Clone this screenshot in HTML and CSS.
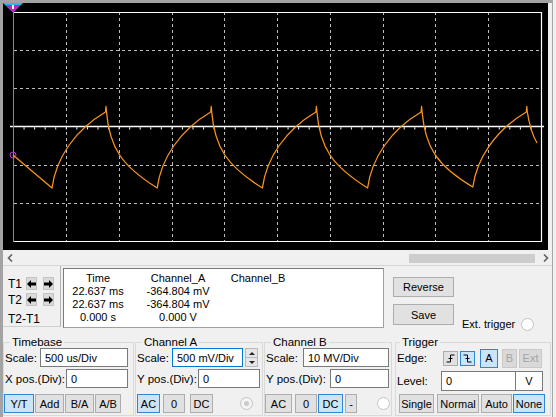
FILE: index.html
```html
<!DOCTYPE html>
<html lang="en">
<head>
    <meta charset="UTF-8">
    <title>Oscilloscope-XSC1</title>
    <link rel="stylesheet" href="styles.css">
</head>
<body>
<div class="scope-window">
    <div class="screen">
        <svg width="545" height="247" viewBox="3 3 545 247">
            <g stroke="#bdbdbd" stroke-width="1" stroke-dasharray="3 3" fill="none">
                <path d="M66.5 12 V241 M119.5 12 V241 M172.5 12 V241 M224.5 12 V241 M277.5 12 V241 M330.5 12 V241 M383.5 12 V241 M435.5 12 V241 M488.5 12 V241"/>
                <path d="M14 50.5 H541 M14 88.5 H541 M14 165.5 H541 M14 203.5 H541"/>
            </g>
            <g stroke="#fff" fill="none">
                <path d="M13 12.5 H541.5 V241.5 H13" stroke-width="1.2"/>
                <path d="M10 126.5 H544" stroke-width="1.3"/>
                <path d="M13 128.3 H542" stroke-width="2.2" stroke-dasharray="1 9.56"/>
            </g>
            <path d="M13.5 10 V242" stroke="#1ed21e" stroke-width="1"/>
            <path fill="none" stroke="#f7941d" stroke-width="1.3" stroke-linejoin="round"
                  d="M13 155 L52 188
                     C56 158 75 130 105.5 112 L106 106.5 L106.5 112 C109.5 148 122 166 157.2 188
                     C161.2 158 180.2 130 210.7 112 L211.2 106.5 L211.7 112 C214.7 148 227.2 166 262.4 188
                     C266.4 158 285.4 130 315.9 112 L316.4 106.5 L316.9 112 C319.9 148 332.4 166 367.6 188
                     C371.6 158 390.6 130 421.1 112 L421.6 106.5 L422.1 112 C425.1 148 437.6 166 472.8 187
                     C476.8 158 495.8 130 526.3 112 L526.8 106.5 L527.3 112 Q530.5 132 537 143"/>
            <circle cx="13" cy="155" r="3" fill="none" stroke="#c23cc2" stroke-width="1"/>
            <polygon points="3,3 23,3 13,12.5" fill="#18c6dc"/>
            <polygon points="5.5,5 20.5,5 13,12.5" fill="#c21ec2"/>
            <rect x="12" y="5" width="2" height="4" fill="#fff"/>
        </svg>
    </div>

    <div class="scrollbar">
        <div class="scroll-arrow">
            <svg width="6" height="8" viewBox="0 0 6 8"><path d="M5 0.5 L1.5 4 L5 7.5" fill="none" stroke="#606060" stroke-width="1.6"/></svg>
        </div>
        <div class="scroll-track">
            <div class="scroll-thumb"></div>
        </div>
        <div class="scroll-arrow scroll-arrow--right">
            <svg width="6" height="8" viewBox="0 0 6 8"><path d="M1 0.5 L4.5 4 L1 7.5" fill="none" stroke="#606060" stroke-width="1.6"/></svg>
        </div>
    </div>

    <div class="cursor-row">
        <div class="cursor-box">
            <div class="cursor-line">
                <span class="cursor-name">T1</span>
                <button class="arrow-btn"><svg width="9" height="8" viewBox="0 0 9 8"><path d="M0 4 L4 0 V2.5 H9 V5.5 H4 V8 Z"/></svg></button>
                <button class="arrow-btn"><svg width="9" height="8" viewBox="0 0 9 8"><path d="M9 4 L5 0 V2.5 H0 V5.5 H5 V8 Z"/></svg></button>
            </div>
            <div class="cursor-line cursor-line--second">
                <span class="cursor-name">T2</span>
                <button class="arrow-btn"><svg width="9" height="8" viewBox="0 0 9 8"><path d="M0 4 L4 0 V2.5 H9 V5.5 H4 V8 Z"/></svg></button>
                <button class="arrow-btn"><svg width="9" height="8" viewBox="0 0 9 8"><path d="M9 4 L5 0 V2.5 H0 V5.5 H5 V8 Z"/></svg></button>
            </div>
            <div class="cursor-diff">T2-T1</div>
        </div>

        <div class="readout">
            <div class="readout-row"><span>Time</span><span>Channel_A</span><span>Channel_B</span></div>
            <div class="readout-row"><span>22.637 ms</span><span>-364.804 mV</span><span></span></div>
            <div class="readout-row"><span>22.637 ms</span><span>-364.804 mV</span><span></span></div>
            <div class="readout-row"><span>0.000 s</span><span>0.000 V</span><span></span></div>
        </div>

        <div class="side-actions">
            <div class="side-buttons">
                <button class="btn side-btn side-btn--reverse">Reverse</button>
                <button class="btn side-btn side-btn--save">Save</button>
            </div>
            <div class="ext-trigger">
                <span>Ext. trigger</span>
                <span class="radio"></span>
            </div>
        </div>
    </div>

    <div class="settings">
        <fieldset class="group group-timebase">
            <legend>Timebase</legend>
            <div class="row">
                <span class="lbl" style="width:35px">Scale:</span>
                <input class="field" style="width:88px" value="500 us/Div" readonly>
            </div>
            <div class="row row--second">
                <span class="lbl" style="width:61px">X pos.(Div):</span>
                <input class="field" style="width:62px" value="0" readonly>
            </div>
            <div class="row row--buttons row--shift">
                <button class="btn on" style="width:30px">Y/T</button>
                <button class="btn" style="width:29px">Add</button>
                <button class="btn" style="width:29px">B/A</button>
                <button class="btn" style="width:26px">A/B</button>
            </div>
        </fieldset>

        <fieldset class="group group-channel-a">
            <legend>Channel A</legend>
            <div class="row">
                <span class="lbl" style="width:35px">Scale:</span>
                <input class="field field--focus" style="width:71px" value="500 mV/Div" readonly>
                <div class="spin">
                    <div class="spin-half"><span class="tri-up"></span></div>
                    <div class="spin-half"><span class="tri-down"></span></div>
                </div>
            </div>
            <div class="row row--second">
                <span class="lbl" style="width:61px">Y pos.(Div):</span>
                <input class="field" style="width:62px" value="0" readonly>
            </div>
            <div class="row row--buttons">
                <button class="btn on" style="width:23px">AC</button>
                <button class="btn" style="width:22px;margin-left:3px">0</button>
                <button class="btn" style="width:23px;margin-left:5px">DC</button>
                <span class="radio radio--dim" style="margin-left:27px"></span>
            </div>
        </fieldset>

        <fieldset class="group group-channel-b">
            <legend>Channel B</legend>
            <div class="row">
                <span class="lbl" style="width:37px">Scale:</span>
                <input class="field" style="width:86px" value="10 MV/Div" readonly>
            </div>
            <div class="row row--second">
                <span class="lbl" style="width:64px">Y pos.(Div):</span>
                <input class="field" style="width:59px" value="0" readonly>
            </div>
            <div class="row row--buttons row--shift">
                <button class="btn" style="width:27px">AC</button>
                <button class="btn" style="width:22px;margin-left:3px">0</button>
                <button class="btn on" style="width:25px;margin-left:1px">DC</button>
                <button class="btn" style="width:12px;margin-left:2px">-</button>
                <span class="radio" style="margin-left:20px"></span>
            </div>
        </fieldset>

        <fieldset class="group group-trigger">
            <legend>Trigger</legend>
            <div class="row row--edge">
                <span class="lbl" style="width:46px">Edge:</span>
                <button class="btn edge-btn">
                    <svg width="9" height="9" viewBox="0 0 9 9"><path d="M0.5 8 H4.5 V1 H8.5 M2.5 4.5 H6.5" fill="none" stroke="#000" stroke-width="1"/></svg>
                </button>
                <button class="btn edge-btn on" style="margin-left:2px">
                    <svg width="9" height="9" viewBox="0 0 9 9"><path d="M0.5 1 H4.5 V8 H8.5 M2.5 4.5 H6.5" fill="none" stroke="#000" stroke-width="1"/></svg>
                </button>
                <button class="btn on" style="width:18px;margin-left:5px">A</button>
                <button class="btn off" style="width:15px;margin-left:4px">B</button>
                <button class="btn off" style="width:23px;margin-left:2px">Ext</button>
            </div>
            <div class="row row--level">
                <span class="lbl" style="width:44px">Level:</span>
                <input class="field" style="width:75px" value="0" readonly>
                <div class="unit-box">V</div>
            </div>
            <div class="row row--buttons row--trigger-mode">
                <button class="btn" style="width:35px;margin-left:2px">Single</button>
                <button class="btn" style="width:42px;margin-left:3px">Normal</button>
                <button class="btn" style="width:31px;margin-left:2px">Auto</button>
                <button class="btn on" style="width:32px;margin-left:1px">None</button>
            </div>
        </fieldset>
    </div>
</div>
</body>
</html>
```

FILE: styles.css
```css
html, body {
    margin: 0;
    width: 100%;
    height: 100%;
}

body {
    background-color: #f0f0f0;
    font-family: "Liberation Sans", Arial, sans-serif;
    font-size: 11px;
    color: #000;
    overflow: hidden;
}

/*示波器窗口*/
.scope-window {
    width: 549px;
    height: 414px;
    border-left: 3px solid #a3a3a3;
    border-top: 3px solid #a3a3a3;
    border-right: 1px solid #a7a7a7;
    background-color: #f0f0f0;
}

/*屏幕*/
.screen {
    width: 545px;
    height: 247px;
    background-color: #000;
}

.screen svg {
    display: block;
}

/*滚动条*/
.scrollbar {
    display: flex;
    height: 15px;
    border-bottom: 1px solid #d4d4d4;
}

.scroll-arrow {
    width: 14px;
    display: flex;
    align-items: center;
    justify-content: center;
}

.scroll-arrow--right {
    width: 13px;
}

.scroll-track {
    flex: 1;
    padding-top: 4px;
}

.scroll-thumb {
    margin-left: 392px;
    width: 126px;
    height: 9px;
    background-color: #cdcdcd;
}

/*游标区*/
.cursor-row {
    display: flex;
    align-items: flex-start;
    height: 64px;
}

.cursor-box {
    width: 58px;
    height: 61px;
    box-sizing: border-box;
    padding: 11px 0 0 5px;
    border-right: 1px solid #b4b4b4;
    border-bottom: 1px solid #cfcfcf;
}

.cursor-line {
    display: flex;
    align-items: center;
    height: 13px;
}

.cursor-line--second {
    margin-top: 3px;
}

.cursor-name {
    width: 20px;
    font-size: 12px;
}

.arrow-btn {
    width: 11px;
    height: 13px;
    padding: 0;
    margin-right: 6px;
    border: 1px solid #c3c3c3;
    background-color: #dadada;
    display: flex;
    align-items: center;
    justify-content: center;
}

.cursor-diff {
    margin-top: 7px;
    line-height: 13px;
    font-size: 12px;
}

.readout {
    margin: 2px 0 0 2px;
    width: 321px;
    height: 60px;
    box-sizing: border-box;
    padding-top: 3px;
    background-color: #fff;
    border: 1px solid #a0a0a0;
    border-top-color: #7a7a7a;
    border-left-color: #7a7a7a;
}

.readout-row {
    display: grid;
    grid-template-columns: 68px 92px 68px;
    line-height: 13px;
    text-align: center;
}

.side-actions {
    display: flex;
    align-items: flex-start;
    margin-left: 9px;
}

.side-buttons {
    display: flex;
    flex-direction: column;
}

.side-btn {
    width: 61px;
}

.side-btn--reverse {
    margin-top: 11px;
    height: 20px;
}

.side-btn--save {
    margin-top: 7px;
    height: 21px;
}

.ext-trigger {
    display: flex;
    align-items: center;
    height: 14px;
    margin: 51px 0 0 8px;
}

.ext-trigger .radio {
    margin-left: 6px;
}

/*通用按钮*/
.btn {
    font: inherit;
    color: #000;
    padding: 0;
    background-color: #e1e1e1;
    border: 1px solid #adadad;
    box-sizing: border-box;
    white-space: nowrap;
}

.btn.on {
    background-color: #cce4f7;
    border-color: #2f86d6;
}

.btn.off {
    color: #a3a3a3;
    background-color: #d9d9d9;
    border-color: #c9c9c9;
}

.radio {
    position: relative;
    display: inline-block;
    width: 13px;
    height: 13px;
    box-sizing: border-box;
    border-radius: 50%;
    border: 1px solid #c2c2c2;
    background-color: #fff;
}

.radio--dim {
    background-color: #f4f4f4;
}

.radio--dim::after {
    content: "";
    position: absolute;
    left: 3px;
    top: 3px;
    width: 5px;
    height: 5px;
    border-radius: 50%;
    background-color: #cacaca;
}

/*底部设置*/
.settings {
    display: flex;
    padding-top: 6px;
}

.group {
    margin: 0;
    padding: 0 0 0 1px;
    height: 80px;
    box-sizing: border-box;
    border: 1px solid #d9d9d9;
    min-width: 0;
}

.group legend {
    margin-left: 5px;
    padding: 0 2px;
    line-height: 12px;
    font-size: 11.5px;
}

.group-timebase {
    width: 131px;
}

.group-channel-a {
    width: 128px;
    margin-left: 1px;
}

.group-channel-b {
    width: 128px;
    margin-left: 1px;
}

.group-trigger {
    width: 156px;
    margin-left: 3px;
}

.group-trigger legend {
    margin-left: 3px;
}

.row {
    display: flex;
    align-items: center;
    height: 19px;
}

.row--second {
    margin-top: 2px;
}

.row--buttons {
    margin-top: 6px;
}

.row--buttons .btn {
    height: 19px;
}

.row--shift {
    margin-left: -1px;
}

.row--buttons.row--shift .btn + .btn {
    margin-left: 1px;
}

.group-timebase .row--buttons .btn + .btn {
    margin-left: 1px;
}

.lbl {
    flex: none;
    white-space: nowrap;
    font-size: 11.5px;
}

.field {
    font: inherit;
    height: 19px;
    box-sizing: border-box;
    padding: 0 4px;
    border: 1px solid #7a7a7a;
    background-color: #fff;
    color: #000;
    outline: none;
}

.field--focus {
    border-color: #0078d7;
}

.spin {
    display: flex;
    flex-direction: column;
    width: 13px;
    height: 19px;
    margin-left: 2px;
}

.spin-half {
    flex: 1;
    display: flex;
    align-items: center;
    justify-content: center;
    background-color: #e6e6e6;
    border: 1px solid #b9b9b9;
}

.spin-half + .spin-half {
    border-top: 0;
}

.tri-up {
    border-left: 3px solid transparent;
    border-right: 3px solid transparent;
    border-bottom: 3px solid #222;
}

.tri-down {
    border-left: 3px solid transparent;
    border-right: 3px solid transparent;
    border-top: 3px solid #222;
}

.row--edge {
    height: 20px;
}

.edge-btn {
    width: 15px;
    height: 15px;
    display: flex;
    align-items: center;
    justify-content: center;
}

.row--edge .btn:not(.edge-btn) {
    height: 19px;
}

.row--level {
    margin-top: 3px;
    height: 20px;
}

.row--level .field {
    height: 20px;
}

.unit-box {
    width: 27px;
    height: 20px;
    box-sizing: border-box;
    border: 1px solid #7a7a7a;
    border-left: 0;
    background-color: #fff;
    text-align: center;
    line-height: 18px;
}

.row--trigger-mode {
    margin-top: 3px;
}
```
